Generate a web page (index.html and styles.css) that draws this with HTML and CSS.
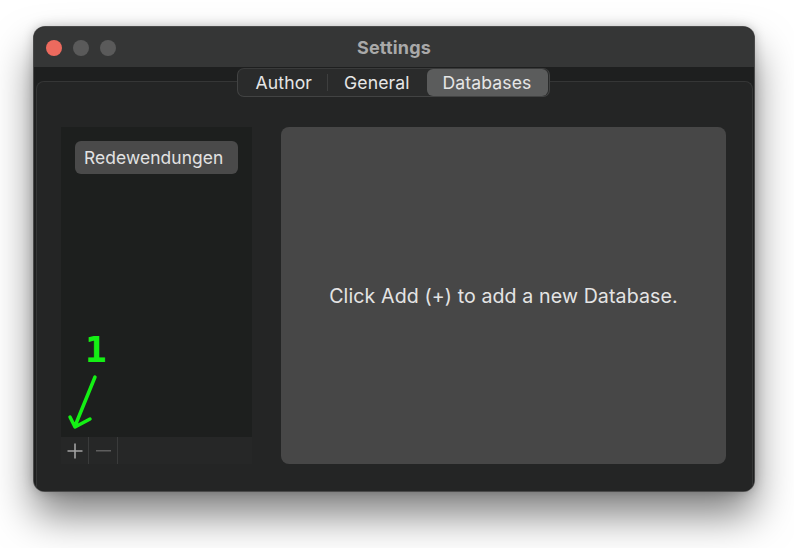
FILE: index.html
```html
<!DOCTYPE html>
<html>
<head>
<meta charset="utf-8">
<link rel="stylesheet" href="styles.css">
</head>
<body>
<div class="window">
  <div class="titlebar">
    <div class="lights">
      <span class="light red"></span>
      <span class="light grey"></span>
      <span class="light grey"></span>
    </div>
    <div class="title">Settings</div>
    <div></div>
  </div>
  <div class="body">
    <div class="tabs">
      <div class="segmented">
        <div class="seg">Author</div>
        <div class="sep"></div>
        <div class="seg">General</div>
        <div class="seg active">Databases</div>
      </div>
    </div>
    <div class="tabbox">
      <div class="list">
        <div class="items">
          <div class="item">Redewendungen</div>
        </div>
        <div class="listbar">
          <div class="btn plus">
            <svg width="16" height="16" viewBox="0 0 16 16"><path d="M8 0.5 V15.5 M0.5 8 H15.5" stroke="#a3a3a3" stroke-width="1.6" fill="none"/></svg>
          </div>
          <div class="btn minus">
            <svg width="15" height="2" viewBox="0 0 15 2"><rect width="15" height="1.5" fill="#5e5e5e"/></svg>
          </div>
          <div class="rest"></div>
        </div>
      </div>
      <div class="detail">Click Add (+) to add a new Database.</div>
    </div>
  </div>
</div>
<div class="note">1</div>
<svg class="arrow" width="794" height="548" viewBox="0 0 794 548">
  <path d="M95 377 L75 426 M70 417 L75 427 L90 419" fill="none" stroke="#14f014" stroke-width="3.5" stroke-linecap="round" stroke-linejoin="round"/>
</svg>
</body>
</html>
```
FILE: styles.css
```css
html, body {
  margin: 0;
  padding: 0;
  background: #ffffff;
  width: 794px;
  height: 548px;
  overflow: hidden;
  font-family: Inter, "Noto Sans", "Liberation Sans", sans-serif;
}
body {
  padding-top: 27px;
  padding-left: 34px;
  box-sizing: border-box;
  position: relative;
}
.window {
  width: 720px;
  height: 464px;
  border-radius: 11px;
  background: #1f1f1f;
  box-shadow: 0 0 0 1px #4a4a4a, 0 24px 40px rgba(0,0,0,0.5), 0 0 12px rgba(0,0,0,0.25);
  overflow: hidden;
  display: flex;
  flex-direction: column;
}
.titlebar {
  height: 40px;
  background: #353636;
  display: grid;
  grid-template-columns: 1fr auto 1fr;
  align-items: center;
  flex-shrink: 0;
}
.lights {
  display: flex;
  gap: 11px;
  padding-left: 12px;
  padding-top: 1px;
}
.light {
  width: 16px;
  height: 16px;
  border-radius: 50%;
  background: #5a5a5a;
}
.light.red { background: #ec6a5e; }
.title {
  color: #a9a9a9;
  font-weight: 700;
  font-size: 18px;
  letter-spacing: 0.2px;
}
.body {
  flex: 1;
  display: flex;
  flex-direction: column;
  background: #1e1f1f;
}
.tabs {
  display: flex;
  justify-content: center;
  padding-top: 1px;
  margin-bottom: -16px;
  position: relative;
  z-index: 1;
}
.segmented {
  height: 29px;
  box-sizing: border-box;
  border: 1px solid #424343;
  border-top-color: #3a3b3b;
  border-radius: 7px;
  background: #2a2b2b;
  display: flex;
  align-items: center;
  padding: 0 1px;
  margin-left: -1px;
}
.seg {
  color: #e6e6e6;
  font-size: 17.6px;
  height: 27px;
  line-height: 27px;
  padding: 0 16px;
  border-radius: 6px;
  letter-spacing: 0.1px;
}
.seg:first-child { padding-left: 17px; padding-right: 15px; }
.sep {
  width: 1px;
  height: 17px;
  background: #3e3f3f;
}
.seg.active {
  background: #5b5c5c;
  padding: 0 17px 0 16px;
  margin-left: 1px;
}
.tabbox {
  flex: 1;
  margin: 0 1px 0 2px;
  background: #242525;
  border: 1px solid #353636;
  border-bottom: none;
  border-radius: 8px 8px 0 0;
  display: flex;
  padding: 45px 26px 27px 24px;
  gap: 29px;
}
.list {
  width: 191px;
  background: #1d1f1e;
  display: flex;
  flex-direction: column;
}
.items {
  flex: 1;
  padding: 14px 14px;
}
.item {
  height: 33px;
  box-sizing: border-box;
  background: #4a4a4a;
  border-radius: 6px;
  color: #e2e2e2;
  font-size: 17.4px;
  line-height: 33px;
  padding-left: 9px;
  letter-spacing: 0.1px;
}
.listbar {
  height: 27px;
  background: #262727;
  display: flex;
  align-items: center;
}
.btn {
  height: 27px;
  display: flex;
  align-items: center;
  justify-content: center;
  box-sizing: border-box;
  border-right: 1px solid #3a3b3b;
}
.btn.plus { width: 28px; padding-left: 1px; }
.btn.minus { width: 29px; }
.rest { flex: 1; }
.detail {
  flex: 1;
  background: #474747;
  border-radius: 8px;
  display: flex;
  align-items: center;
  justify-content: center;
  color: #e4e4e4;
  font-size: 19.6px;
  letter-spacing: 0.1px;
}
.note {
  position: absolute;
  left: 85px;
  top: 330px;
  color: #14f014;
  font-family: "DejaVu Sans Mono", "Liberation Mono", monospace;
  font-weight: 700;
  font-size: 36px;
  line-height: 40px;
}
.arrow {
  position: absolute;
  left: 0;
  top: 0;
}
```
